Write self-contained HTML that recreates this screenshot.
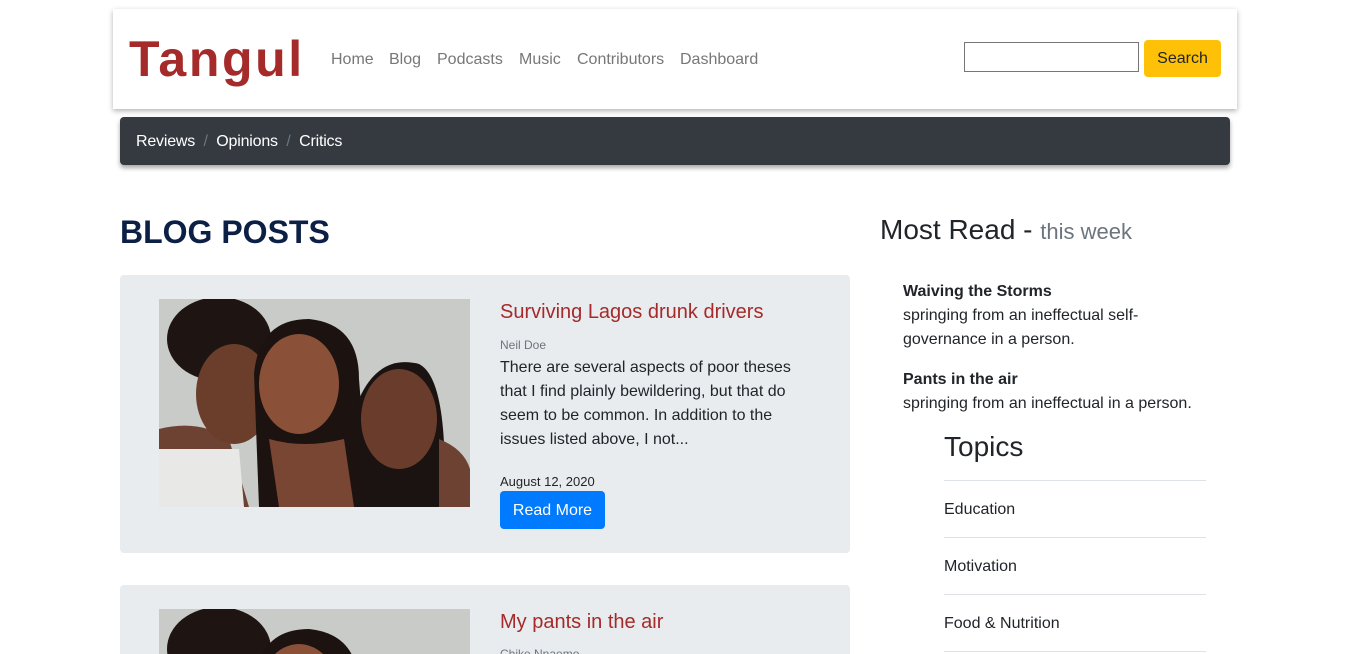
<!DOCTYPE html>
<html><head><meta charset="utf-8"><style>
*{margin:0;padding:0;box-sizing:border-box}
html,body{width:1349px;height:654px;overflow:hidden}
body{background:#fff;font-family:"Liberation Sans",Arial,sans-serif;position:relative;color:#212529}
.a{position:absolute;white-space:nowrap}
.nav{left:113px;top:9px;width:1124px;height:100px;background:#fff;box-shadow:0 2px 5px rgba(0,0,0,.3)}
.logo{left:129px;top:30px;font-size:50px;font-weight:bold;color:#a52a2a;letter-spacing:2.6px;line-height:58px}
.nl{top:50px;font-size:16px;color:#777;line-height:20px}
.bc{left:120px;top:117px;width:1110px;height:48px;background:#343a40;border-radius:4px;box-shadow:0 3px 5px rgba(0,0,0,.35)}
.bt{top:132px;font-size:16px;color:#fff;line-height:20px;letter-spacing:-0.2px}
.sep{color:#6c757d}
.card{left:120px;width:730px;background:#e9ecef;border-radius:4px}
.t{font-size:20px;color:#a52a2a;line-height:24px}
p.b{font-size:16px;line-height:24px;white-space:normal;width:300px}
</style></head><body>
<div class="a nav"></div>
<div class="a logo">Tangul</div>
<div class="a nl" style="left:331px">Home</div>
<div class="a nl" style="left:389px">Blog</div>
<div class="a nl" style="left:437px">Podcasts</div>
<div class="a nl" style="left:519px">Music</div>
<div class="a nl" style="left:577px">Contributors</div>
<div class="a nl" style="left:680px">Dashboard</div>
<div class="a" style="left:964px;top:42px;width:175px;height:30px;border:1px solid #767676;background:#fff"></div>
<div class="a" style="left:1144px;top:40px;width:77px;height:37px;background:#ffc107;border-radius:4px;font-size:16px;color:#212529;text-align:center;line-height:37px">Search</div>
<div class="a bc"></div>
<div class="a bt" style="left:136px">Reviews <span class="sep">&nbsp;/&nbsp;</span> Opinions <span class="sep">&nbsp;/&nbsp;</span> Critics</div>

<div class="a" style="left:120px;top:213px;font-size:32px;font-weight:bold;color:#0c1f45;line-height:38px">BLOG POSTS</div>

<div class="a card" style="top:275px;height:278px"></div>
<svg class="a" style="left:159px;top:299px" width="311" height="208" viewBox="0 0 311 208">
<rect width="311" height="208" fill="#c9cbc8"/>
<path d="M0 130 Q40 120 70 140 L90 208 L0 208Z" fill="#6e4232"/>
<path d="M0 150 L80 150 L85 208 L0 208Z" fill="#e8e8e6"/>
<ellipse cx="60" cy="40" rx="52" ry="42" fill="#1e1512"/>
<ellipse cx="75" cy="95" rx="38" ry="50" fill="#6b3e2c"/>
<path d="M95 75 Q100 20 150 20 Q200 25 200 80 L210 208 L100 208Z" fill="#1c1310"/>
<ellipse cx="140" cy="85" rx="40" ry="50" fill="#8a5038"/>
<path d="M110 140 Q145 150 185 140 L195 208 L120 208Z" fill="#7a4634"/>
<path d="M200 100 Q220 55 260 65 Q290 80 285 208 L205 208Z" fill="#1a1311"/>
<ellipse cx="240" cy="120" rx="38" ry="50" fill="#6a3c2b"/>
<path d="M280 140 Q305 150 311 170 L311 208 L280 208Z" fill="#6e4232"/>
</svg>
<div class="a t" style="left:500px;top:300px">Surviving Lagos drunk drivers</div>
<div class="a" style="left:500px;top:338px;font-size:12px;color:#6c757d">Neil Doe</div>
<p class="a b" style="left:500px;top:356px">There are several aspects of poor theses that I find plainly bewildering, but that do seem to be common. In addition to the issues listed above, I not...</p>
<div class="a" style="left:500px;top:474px;font-size:13px;line-height:16px">August 12, 2020</div>
<div class="a" style="left:500px;top:491px;width:105px;height:38px;background:#007bff;border-radius:4px;color:#fff;font-size:16px;text-align:center;line-height:39px">Read More</div>

<div class="a card" style="top:585px;height:69px;border-radius:4px 4px 0 0"></div>
<svg class="a" style="left:159px;top:609px" width="311" height="45" viewBox="0 0 311 45">
<rect width="311" height="45" fill="#c9cbc8"/>
<ellipse cx="60" cy="40" rx="52" ry="42" fill="#1e1512"/>
<path d="M95 75 Q100 20 150 20 Q200 25 200 80Z" fill="#1c1310"/>
<ellipse cx="140" cy="85" rx="40" ry="50" fill="#8a5038"/>
</svg>
<div class="a t" style="left:500px;top:610px">My pants in the air</div>
<div class="a" style="left:500px;top:647px;font-size:12px;color:#6c757d">Chike Nnaemo</div>

<div class="a" style="left:880px;top:214px;font-size:28px;line-height:32px">Most Read - <span style="font-size:22px;color:#6c757d">this week</span></div>
<div class="a" style="left:903px;top:280px;font-size:16px;line-height:24px;white-space:normal;width:300px"><b>Waiving the Storms</b><br>springing from an ineffectual self-governance in a person.</div>
<div class="a" style="left:903px;top:368px;font-size:16px;line-height:24px"><b>Pants in the air</b><br>springing from an ineffectual in a person.</div>
<div class="a" style="left:944px;top:431px;font-size:28px;line-height:32px">Topics</div>
<div class="a" style="left:944px;top:480px;width:262px;border-top:1px solid #dee2e6"></div>
<div class="a" style="left:944px;top:501px;font-size:16px">Education</div>
<div class="a" style="left:944px;top:537px;width:262px;border-top:1px solid #dee2e6"></div>
<div class="a" style="left:944px;top:558px;font-size:16px">Motivation</div>
<div class="a" style="left:944px;top:594px;width:262px;border-top:1px solid #dee2e6"></div>
<div class="a" style="left:944px;top:615px;font-size:16px">Food &amp; Nutrition</div>
<div class="a" style="left:944px;top:651px;width:262px;border-top:1px solid #dee2e6"></div>
</body></html>
